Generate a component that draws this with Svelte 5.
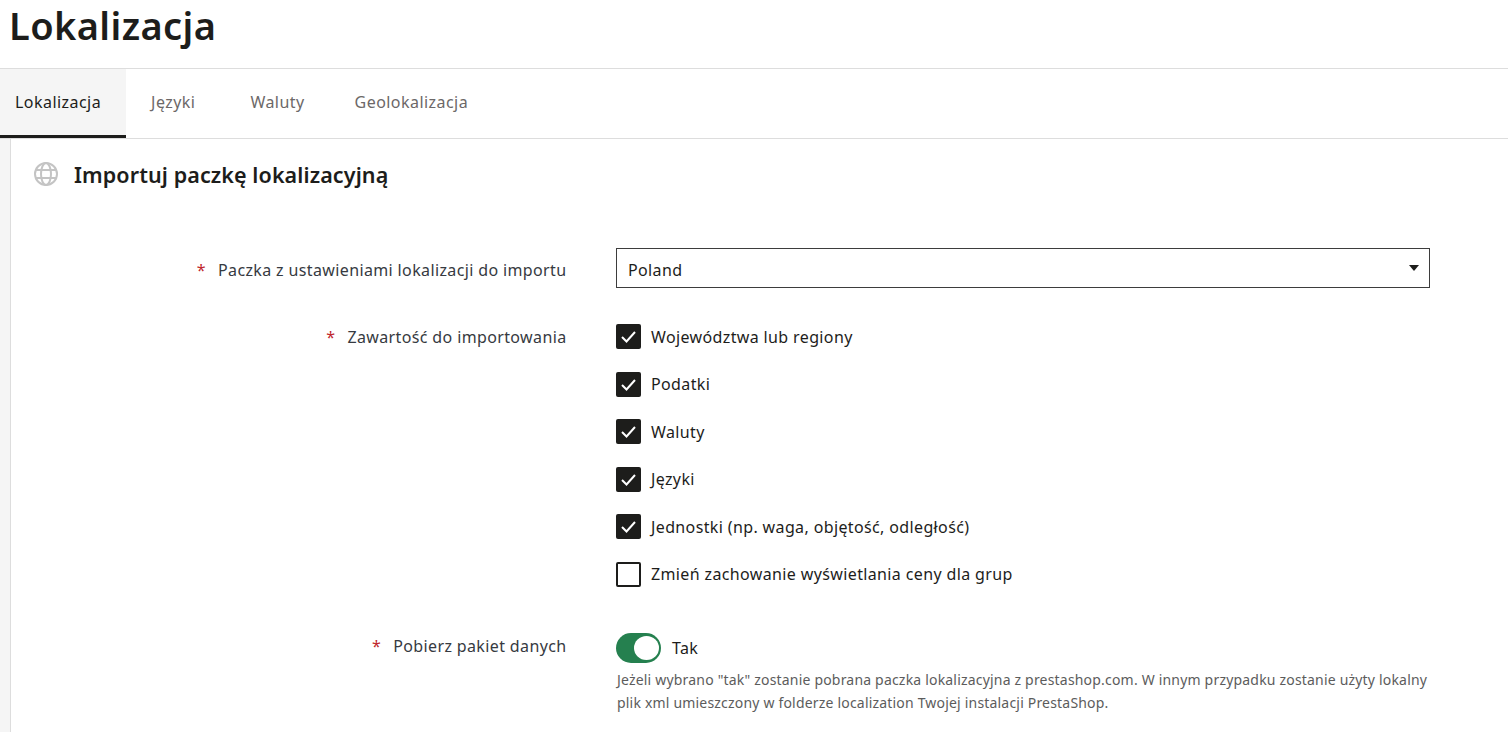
<script>
  const tabs = ["Lokalizacja", "Języki", "Waluty", "Geolokalizacja"];
  const content = [
    { label: "Województwa lub regiony", checked: true },
    { label: "Podatki", checked: true },
    { label: "Waluty", checked: true },
    { label: "Języki", checked: true },
    { label: "Jednostki (np. waga, objętość, odległość)", checked: true },
    { label: "Zmień zachowanie wyświetlania ceny dla grup", checked: false }
  ];
</script>

<div class="page">
  <header class="head">
    <h1>Lokalizacja</h1>
  </header>

  <nav class="tabs">
    {#each tabs as tab, i}
      <span class="tab" class:active={i === 0}>{tab}</span>
    {/each}
  </nav>

  <div class="body">
    <section class="card">
      <h2>
        <svg class="globe" viewBox="0 0 24 24" width="24" height="24" fill="none" stroke="#c4c4c4" stroke-width="2">
          <circle cx="12" cy="12" r="11" />
          <ellipse cx="12" cy="12" rx="5" ry="11" />
          <path d="M2 8h20M2 16h20" />
        </svg>
        Importuj paczkę lokalizacyjną
      </h2>

      <div class="row first">
        <div class="label"><span class="req">*</span>Paczka z ustawieniami lokalizacji do importu</div>
        <div class="select">
          <span class="value">Poland</span>
          <i class="caret"></i>
        </div>
      </div>

      <div class="row second">
        <div class="label"><span class="req">*</span>Zawartość do importowania</div>
        <div class="checks">
          {#each content as item}
            <div class="check">
              <span class="box" class:on={item.checked}>
                {#if item.checked}
                  <svg viewBox="0 0 25 25" width="25" height="25" fill="none" stroke="#fff" stroke-width="2">
                    <path d="M6 13l4.500 4.500L19 8" />
                  </svg>
                {/if}
              </span>
              {item.label}
            </div>
          {/each}
        </div>
      </div>

      <div class="row third">
        <div class="label"><span class="req">*</span>Pobierz pakiet danych</div>
        <div class="field">
          <div class="switch-line">
            <span class="switch"><span class="knob"></span></span>
            Tak
          </div>
          <p class="help">
            Jeżeli wybrano "tak" zostanie pobrana paczka lokalizacyjna z prestashop.com. W innym przypadku zostanie użyty lokalny plik xml umieszczony w folderze localization Twojej instalacji PrestaShop.
          </p>
        </div>
      </div>
    </section>
  </div>
</div>

<style>
  :global(body) {
    background: #fff;
    overflow: hidden;
  }
  .page {
    height: 732px;
    overflow: hidden;
    font-family: "Noto Sans", "Liberation Sans", sans-serif;
    font-size: 16px;
    letter-spacing: 0.37px;
    color: #1d1d1b;
  }
  .head {
    height: 68px;
    box-sizing: content-box;
    border-bottom: 1px solid #ddd;
    padding-left: 9px;
  }
  h1 {
    margin: 0;
    font-size: 38px;
    line-height: 50px;
    font-weight: 600;
    letter-spacing: 0.4px;
  }
  .tabs {
    display: flex;
    height: 69px;
    border-bottom: 1px solid #ddd;
    box-sizing: content-box;
  }
  .tab {
    box-sizing: border-box;
    height: 69px;
    padding: 0 25px;
    line-height: 66px;
    color: #6c6868;
    letter-spacing: 0.45px;
    border-bottom: 3px solid transparent;
  }
  .tab:first-child {
    padding: 0 25px 0 15px;
  }
  /* Języki sets narrower in this font, keep the next tab in place */
  .tab:nth-child(2) {
    padding-right: 30px;
  }
  .tab.active {
    color: #1d1d1b;
    background: #f5f5f5;
    border-bottom-color: #1d1d1b;
  }
  .body {
    background: #f5f5f5;
    padding-left: 10px;
  }
  .card {
    background: #fff;
    border-left: 1px solid #ddd;
    height: 593px;
  }
  h2 {
    display: flex;
    align-items: center;
    margin: 0;
    padding: 21px 0 0 23px;
    font-size: 21.5px;
    line-height: 30px;
    font-weight: 600;
    letter-spacing: 0.1px;
  }
  .globe {
    margin-right: 16px;
    margin-top: -2px;
  }
  .row {
    display: flex;
    align-items: flex-start;
  }
  .first {
    margin-top: 58px;
  }
  .second {
    margin-top: 36px;
  }
  .third {
    margin-top: 46px;
  }
  .label {
    box-sizing: border-box;
    width: 555.5px;
    flex: none;
    text-align: right;
    color: #363a41;
    line-height: 24px;
  }
  .first .label {
    padding-top: 10px;
  }
  .second .label {
    padding-top: 1px;
  }
  .third .label {
    padding-top: 1px;
  }
  .req {
    color: #c0272d;
    margin-right: 12px;
  }
  .select {
    box-sizing: border-box;
    width: 814px;
    height: 40px;
    margin-left: 49.5px;
    padding: 0 10px 0 11px;
    border: 1px solid #3d3d3d;
    display: flex;
    align-items: center;
    justify-content: space-between;
  }
  .value {
    padding-top: 3px;
  }
  .caret {
    width: 0;
    height: 0;
    border-left: 5px solid transparent;
    border-right: 5px solid transparent;
    border-top: 6px solid #1d1d1b;
  }
  .checks {
    margin-left: 49.5px;
    display: flex;
    flex-direction: column;
    gap: 22.5px;
  }
  .check {
    display: flex;
    align-items: center;
    height: 25px;
    gap: 10px;
    white-space: nowrap;
  }
  .box {
    box-sizing: border-box;
    display: block;
    width: 25px;
    height: 25px;
    border: 2px solid #1d1d1b;
    border-radius: 2px;
  }
  .box.on {
    background: #1d1d1b;
    border: 0;
  }
  .box svg {
    display: block;
  }
  .field {
    margin-left: 49.5px;
    width: 814px;
  }
  .switch-line {
    display: flex;
    align-items: center;
    gap: 11px;
  }
  .switch {
    box-sizing: border-box;
    display: block;
    width: 45px;
    height: 30px;
    border-radius: 15px;
    background: #25804f;
    position: relative;
  }
  .knob {
    position: absolute;
    right: 2px;
    top: 3px;
    width: 25px;
    height: 24px;
    border-radius: 50%;
    background: #fff;
  }
  .help {
    margin: 5px 0 0 1px;
    font-size: 14px;
    letter-spacing: 0.19px;
    line-height: 23px;
    color: #5c5c5c;
  }
</style>
